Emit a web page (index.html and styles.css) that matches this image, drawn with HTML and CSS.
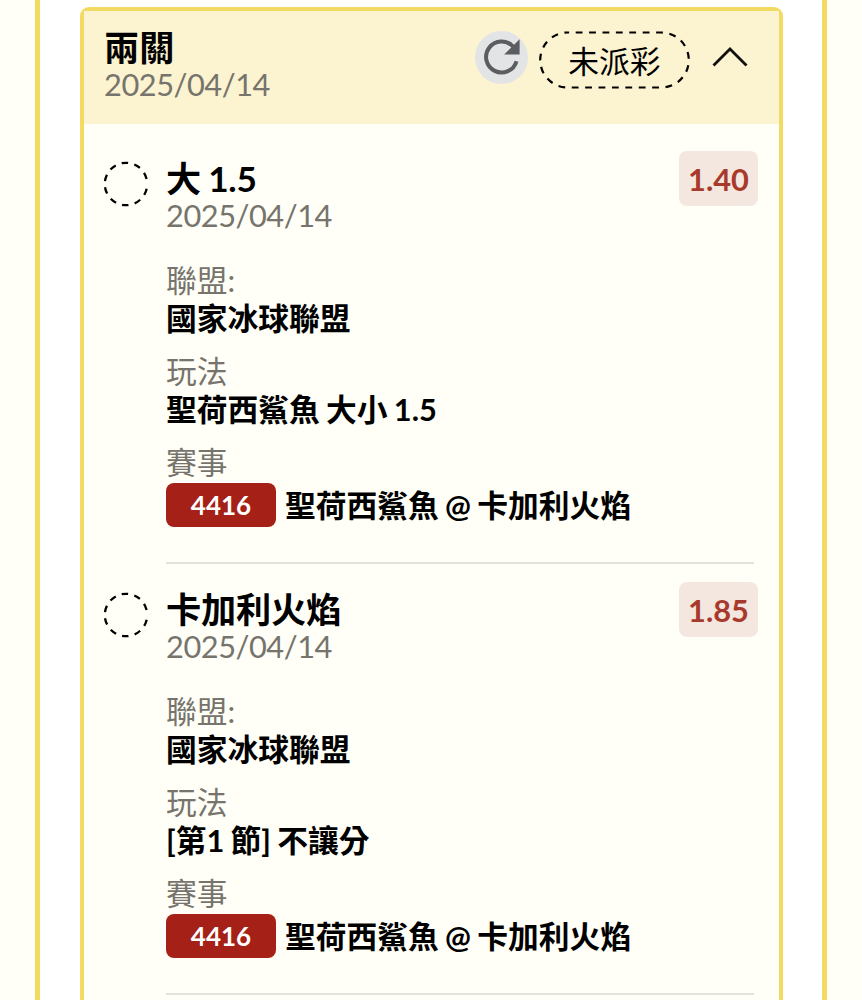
FILE: index.html
```html
<!DOCTYPE html>
<html lang="zh-Hant">
<head>
  <meta charset="UTF-8">
  <meta name="viewport" content="width=device-width, initial-scale=1.0">
  <title>注單</title>
  <link rel="stylesheet" href="styles.css">
</head>
<body>

  <main class="panel">
    <section class="ticket">

      <!-- Ticket header -->
      <header class="ticket-header">
        <div class="ticket-title">
          <h1 class="title">兩關</h1>
          <p class="date">2025/04/14</p>
        </div>
        <button class="refresh" aria-label="refresh">
          <svg width="53" height="53" viewBox="0 0 53 53">
            <path d="M41.5 30.2A15.5 15.5 0 1 1 38 15.5" fill="none" stroke="#5c5d60" stroke-width="4"/>
            <path d="M44.6 8.2V23.4H29.2Z" fill="#5c5d60"/>
          </svg>
        </button>
        <div class="status">
          <svg class="status-outline" width="151" height="59" viewBox="0 0 151 59">
            <rect x="1.2" y="1.5" width="148.6" height="55" rx="27.5" fill="none" stroke="#000" stroke-width="2.2" stroke-dasharray="6.8 6.6" stroke-dashoffset="-8"/>
          </svg>
          <span class="status-text">未派彩</span>
        </div>
        <svg class="chevron" width="36" height="22" viewBox="0 0 36 22">
          <path d="M1.5 19.5L18 3L34.5 19.5" fill="none" stroke="#111" stroke-width="2.8"/>
        </svg>
      </header>

      <!-- Leg 1 -->
      <article class="leg">
        <svg class="leg-mark" width="46" height="46" viewBox="0 0 46 46">
          <circle cx="23" cy="23" r="21.2" fill="none" stroke="#000" stroke-width="2.3" pathLength="360" stroke-dasharray="18 17" stroke-dashoffset="-13"/>
        </svg>
        <div class="leg-body">
          <div class="leg-head">
            <h2 class="title">大 1.5</h2>
            <p class="date">2025/04/14</p>
            <span class="odds">1.40</span>
          </div>
          <dl class="details">
            <div class="detail">
              <dt>聯盟:</dt>
              <dd>國家冰球聯盟</dd>
            </div>
            <div class="detail">
              <dt>玩法</dt>
              <dd>聖荷西鯊魚 大小 1.5</dd>
            </div>
            <div class="detail">
              <dt>賽事</dt>
              <dd class="match"><span class="code">4416</span>聖荷西鯊魚 @ 卡加利火焰</dd>
            </div>
          </dl>
        </div>
      </article>

      <!-- Leg 2 -->
      <article class="leg">
        <svg class="leg-mark" width="46" height="46" viewBox="0 0 46 46">
          <circle cx="23" cy="23" r="21.2" fill="none" stroke="#000" stroke-width="2.3" pathLength="360" stroke-dasharray="18 17" stroke-dashoffset="-13"/>
        </svg>
        <div class="leg-body">
          <div class="leg-head">
            <h2 class="title">卡加利火焰</h2>
            <p class="date">2025/04/14</p>
            <span class="odds">1.85</span>
          </div>
          <dl class="details">
            <div class="detail">
              <dt>聯盟:</dt>
              <dd>國家冰球聯盟</dd>
            </div>
            <div class="detail">
              <dt>玩法</dt>
              <dd>[第1 節] 不讓分</dd>
            </div>
            <div class="detail">
              <dt>賽事</dt>
              <dd class="match"><span class="code">4416</span>聖荷西鯊魚 @ 卡加利火焰</dd>
            </div>
          </dl>
        </div>
      </article>

    </section>
  </main>

</body>
</html>
```
FILE: styles.css
```css
/* Global styles */
* {
  box-sizing: border-box;
}

body {
  margin: 0;
  height: 1000px;
  overflow: hidden;
  background-color: #fffff7;
  color: #000;
  font-family: Lato, "Noto Sans CJK TC", sans-serif;
  font-size: 30.75px;
  word-spacing: -1.2px;
}

h1, h2, p, dl, dd {
  margin: 0;
}

/* Panel */
.panel {
  width: 792px;
  height: 1010px;
  margin-left: 35px;
  padding: 7px 39px 0 40px;
  background-color: #fff;
  border: solid #f3da62;
  border-width: 0 5px;
}

.ticket {
  height: 1010px;
  background-color: #fffff7;
  border: 4.5px solid #f3da62;
  border-radius: 9px;
}

/* Ticket header */
.ticket-header {
  display: flex;
  height: 113px;
  padding: 20px 31px 0 20px;
  background-color: #fcf3d0;
}

.ticket-title {
  flex: 1;
  margin-top: -1px;
}

.title {
  margin: -1px 0 1px;
  font-size: 35.2px;
  line-height: 37px;
  font-weight: 700;
}

.date {
  color: #76746c;
  line-height: 36px;
  letter-spacing: -0.45px;
}

.refresh {
  width: 53px;
  height: 53px;
  padding: 0;
  margin-right: 11px;
  border: none;
  border-radius: 50%;
  background-color: #e3e4e6;
}

.refresh svg {
  display: block;
}

.status {
  position: relative;
  width: 151px;
  height: 59px;
  margin-right: 22px;
  text-align: center;
  line-height: 61px;
}

.status-outline {
  position: absolute;
  inset: 0;
}

.chevron {
  margin-top: 15px;
}

/* Legs */
.leg {
  display: flex;
  height: 431px;
  padding: 37px 25px 0 19px;
}

.leg-mark {
  flex: none;
  margin-right: 17px;
}

.leg-body {
  flex: 1;
  height: 403px;
  border-bottom: 2px solid #e4e3db;
}

.leg-head {
  display: flow-root;
  position: relative;
  height: 101px;
}

.leg-head .title {
  letter-spacing: -0.2px;
}

.odds {
  position: absolute;
  top: -10px;
  right: -4px;
  width: 79px;
  height: 55px;
  border-radius: 8px;
  background-color: #f3e7e0;
  color: #a83a2b;
  font-weight: 700;
  line-height: 58px;
  text-align: center;
}

/* Details */
.detail {
  margin-bottom: 15px;
  line-height: 38px;
}

.detail dt {
  color: #76746c;
}

.detail dd {
  font-weight: 700;
}

.match {
  display: flex;
  line-height: 48px;
}

.code {
  width: 110px;
  height: 44px;
  margin: 1px 9px 0 0;
  border-radius: 8px;
  background-color: #a52016;
  color: #fff;
  font-size: 26px;
  line-height: 45px;
  text-align: center;
}
```
